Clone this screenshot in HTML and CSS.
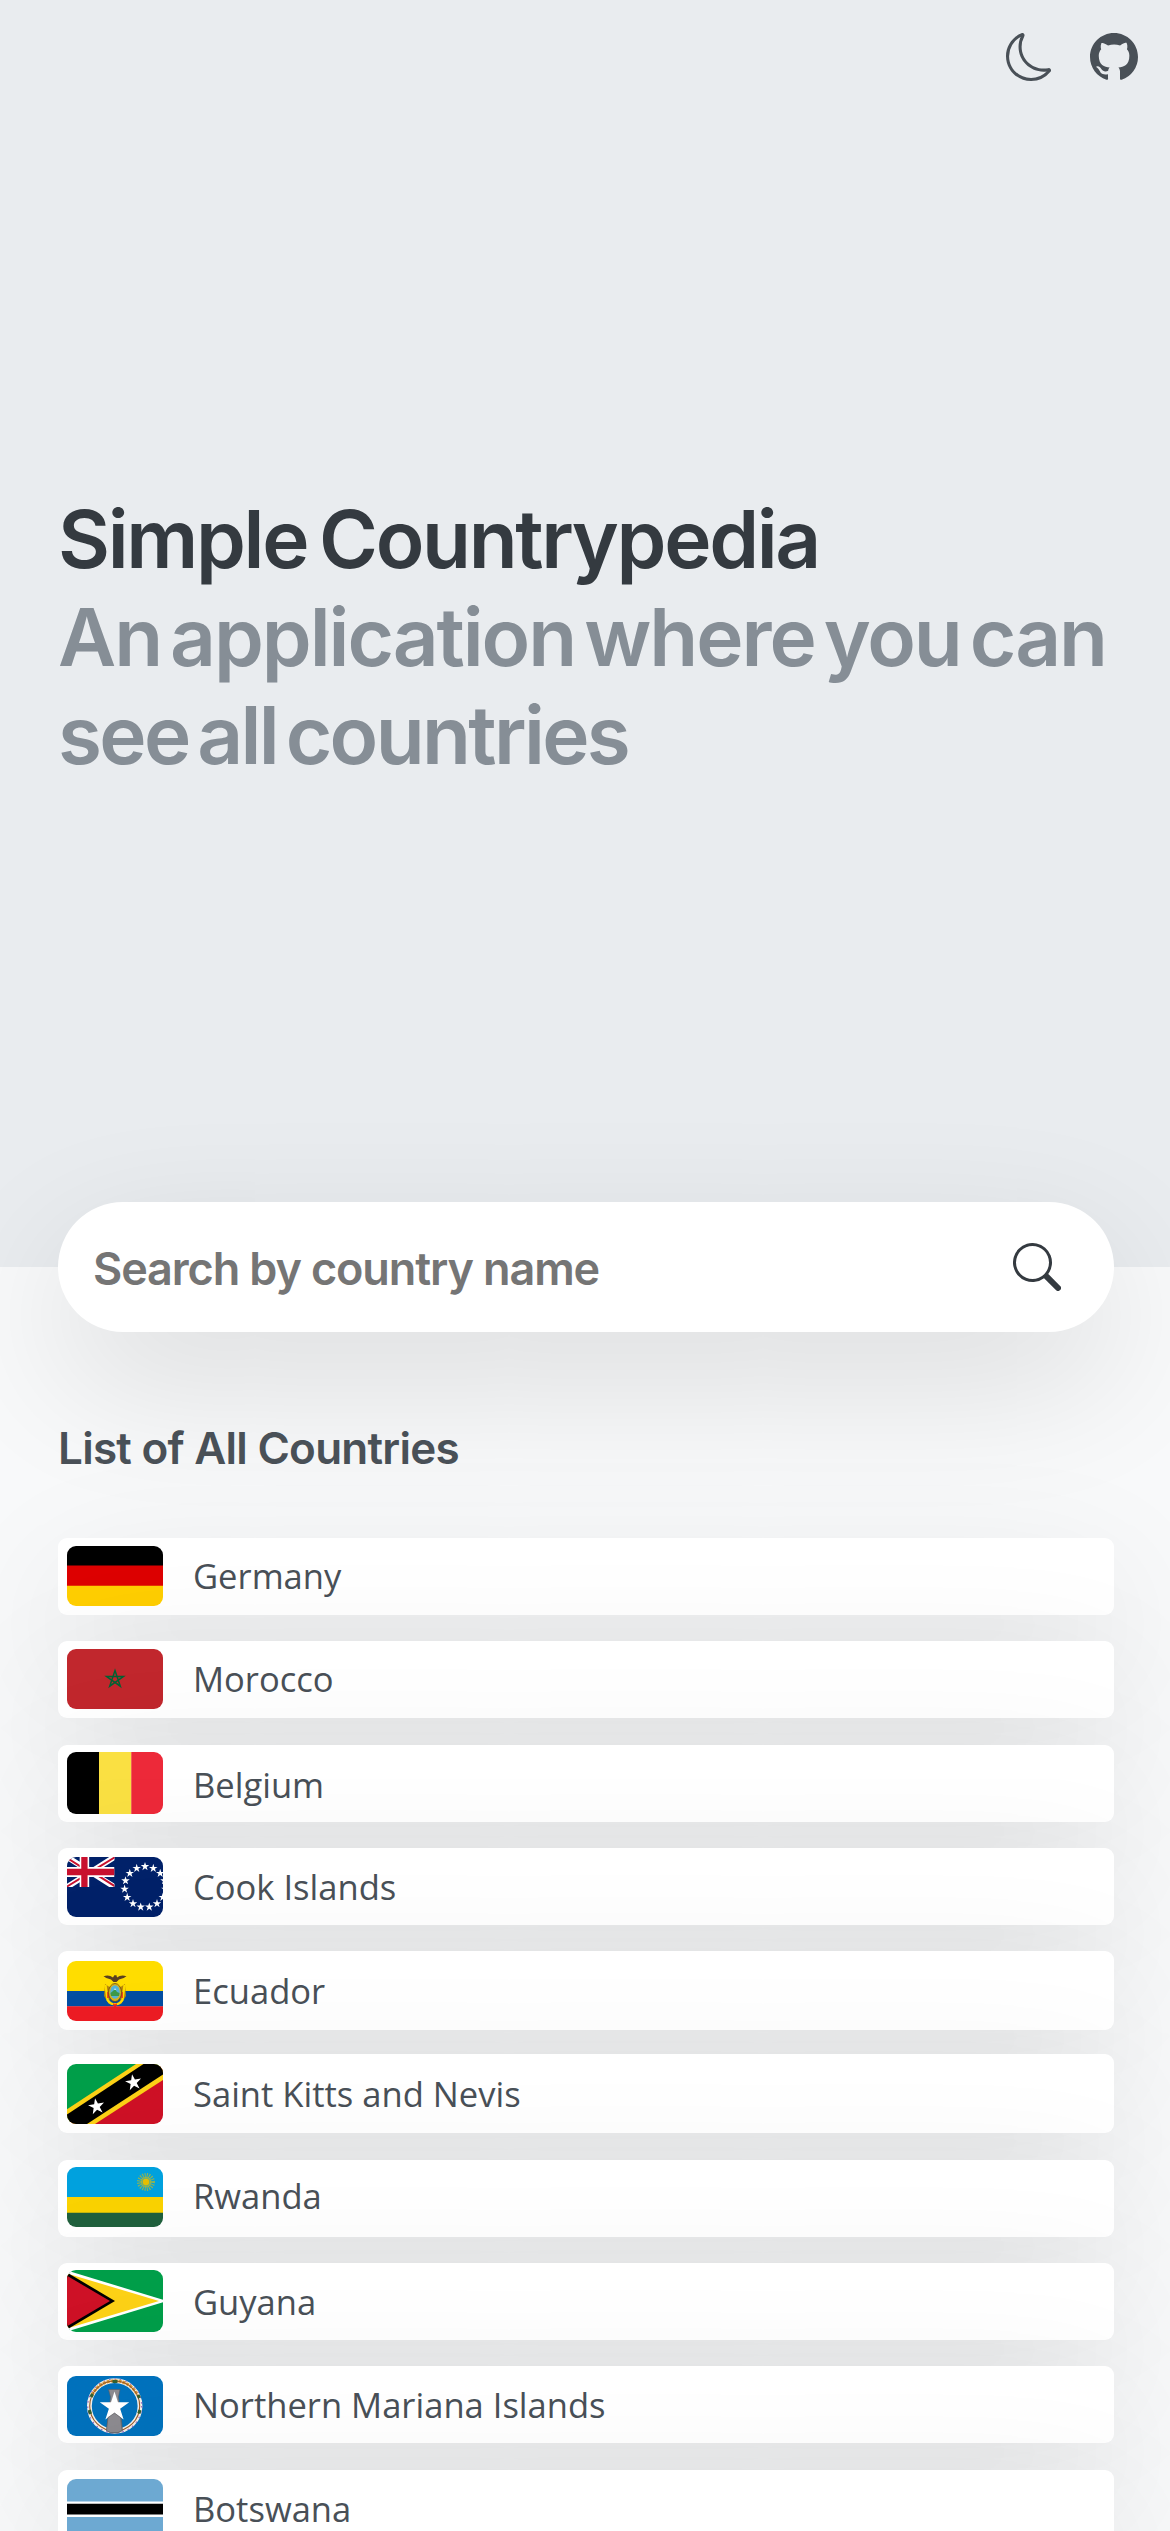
FILE: index.html
```
<!DOCTYPE html>
<html lang="en">
<head>
<meta charset="utf-8">
<meta name="viewport" content="width=device-width, initial-scale=1">
<title>Simple Countrypedia</title>
<link rel="stylesheet" href="styles.css">
</head>
<body>
<svg class="defs" width="0" height="0" aria-hidden="true">
  <defs>
    <path id="star" d="M0-1 .225-.309 .951-.309 .363.118 .588.809 0 .382-.588.809-.363.118-.951-.309-.225-.309z"/>
  </defs>
</svg>

<header class="hero">
  <nav class="nav">
    <button class="icon-button" aria-label="Toggle theme">
      <svg class="icon" viewBox="0 0 16 16"><path d="M6 .278a.768.768 0 0 1 .08.858 7.208 7.208 0 0 0-.878 3.46c0 4.021 3.278 7.277 7.318 7.277.527 0 1.04-.055 1.533-.16a.787.787 0 0 1 .81.316.733.733 0 0 1-.031.893A8.349 8.349 0 0 1 8.344 16C3.734 16 0 12.286 0 7.71 0 4.266 2.114 1.312 5.124.06A.752.752 0 0 1 6 .278zM4.858 1.311A7.269 7.269 0 0 0 1.025 7.71c0 4.02 3.279 7.276 7.319 7.276a7.316 7.316 0 0 0 5.205-2.162c-.337.042-.68.063-1.029.063-4.61 0-8.343-3.714-8.343-8.29 0-1.167.242-2.278.681-3.286z"/></svg>
    </button>
    <a class="icon-button" href="#" aria-label="GitHub">
      <svg class="icon" viewBox="0 0 16 16"><path d="M8 0C3.58 0 0 3.58 0 8c0 3.54 2.29 6.53 5.47 7.59.4.07.55-.17.55-.38 0-.19-.01-.82-.01-1.49-2.01.37-2.53-.49-2.69-.94-.09-.23-.48-.94-.82-1.13-.28-.15-.68-.52-.01-.53.63-.01 1.08.58 1.23.82.72 1.21 1.87.87 2.33.66.07-.52.28-.87.51-1.07-1.78-.2-3.64-.89-3.64-3.95 0-.87.31-1.59.82-2.15-.08-.2-.36-1.02.08-2.12 0 0 .67-.21 2.2.82.64-.18 1.32-.27 2-.27.68 0 1.36.09 2 .27 1.53-1.04 2.2-.82 2.2-.82.44 1.1.16 1.92.08 2.12.51.56.82 1.27.82 2.15 0 3.07-1.87 3.75-3.65 3.95.29.25.54.73.54 1.48 0 1.07-.01 1.93-.01 2.2 0 .21.15.46.55.38A8.012 8.012 0 0 0 16 8c0-4.42-3.58-8-8-8z"/></svg>
    </a>
  </nav>
  <h1 class="title">
    <span class="title-name">Simple Countrypedia</span>
    <span class="title-lead">An application where you can</span>
    <span class="title-tail">see all countries</span>
  </h1>
</header>

<main class="content">
  <form class="search">
    <input class="search-input" type="text" placeholder="Search by country name" aria-label="Search by country name">
    <button class="search-button" type="button" aria-label="Search">
      <svg class="icon" viewBox="0 0 16 16"><path d="M11.742 10.344a6.5 6.5 0 1 0-1.397 1.398h-.001c.03.04.062.078.098.115l3.85 3.85a1 1 0 0 0 1.415-1.414l-3.85-3.85a1.007 1.007 0 0 0-.115-.1zM12 6.5a5.5 5.5 0 1 1-11 0 5.5 5.5 0 0 1 11 0z"/></svg>
    </button>
  </form>

  <h2 class="subtitle">List of All Countries</h2>

  <ul class="countries">
    <li class="country">
      <svg class="flag" viewBox="0 0 96 60" preserveAspectRatio="none"><path fill="#000" d="M0 0h96v20H0z"/><path fill="#d00" d="M0 19.5h96V40H0z"/><path fill="#ffce00" d="M0 39.7h96V60H0z"/></svg>
      <span class="name">Germany</span>
    </li>
    <li class="country">
      <svg class="flag" viewBox="0 0 96 60" preserveAspectRatio="none"><path fill="#c1272d" d="M0 0h96v60H0z"/><path fill="none" stroke="#006233" stroke-width="1.5" d="M48 21.5 53.3 37.2 39.6 27.5H56.4L42.7 37.2z"/></svg>
      <span class="name">Morocco</span>
    </li>
    <li class="country">
      <svg class="flag flag-tall" viewBox="0 0 96 60" preserveAspectRatio="none"><path fill="#000" d="M0 0h32v60H0z"/><path fill="#fae042" d="M32 0h32.5v60H32z"/><path fill="#ed2939" d="M64.3 0H96v60H64.300z"/></svg>
      <span class="name">Belgium</span>
    </li>
    <li class="country">
      <svg class="flag" viewBox="0 0 96 60" preserveAspectRatio="none">
        <path fill="#012169" d="M0 0h96v60H0z"/>
        <svg width="47.500" height="30" viewBox="0 0 60 30" preserveAspectRatio="none">
          <path stroke="#fff" stroke-width="6" d="M0 0 60 30M60 0 0 30"/>
          <path stroke="#c8102e" stroke-width="2" d="M0 1 28 15M60 29 32 15M61 0 32 14M-1 30 28 16"/>
          <path stroke="#fff" stroke-width="12" d="M22 0V30"/>
          <path stroke="#fff" stroke-width="10" d="M0 15H60"/>
          <path stroke="#c8102e" stroke-width="8" d="M22 0V30"/>
          <path stroke="#c8102e" stroke-width="6.500" d="M0 15H60"/>
        </svg>
        <g fill="#fff">
          <use href="#star" transform="translate(78 9.500) scale(4.500)"/>
          <use href="#star" transform="translate(86.300 11.300) scale(4.500)"/>
          <use href="#star" transform="translate(93.200 16.300) scale(4.500)"/>
          <use href="#star" transform="translate(97.500 23.700) scale(4.500)"/>
          <use href="#star" transform="translate(98.400 32.100) scale(4.500)"/>
          <use href="#star" transform="translate(95.800 40.300) scale(4.500)"/>
          <use href="#star" transform="translate(90 46.600) scale(4.500)"/>
          <use href="#star" transform="translate(82.300 50) scale(4.500)"/>
          <use href="#star" transform="translate(73.700 50) scale(4.500)"/>
          <use href="#star" transform="translate(66 46.600) scale(4.500)"/>
          <use href="#star" transform="translate(60.200 40.300) scale(4.500)"/>
          <use href="#star" transform="translate(57.600 32.100) scale(4.500)"/>
          <use href="#star" transform="translate(58.500 23.700) scale(4.500)"/>
          <use href="#star" transform="translate(62.800 16.300) scale(4.500)"/>
          <use href="#star" transform="translate(69.700 11.300) scale(4.500)"/>
        </g>
      </svg>
      <span class="name">Cook Islands</span>
    </li>
    <li class="country">
      <svg class="flag" viewBox="0 0 96 60" preserveAspectRatio="none">
        <path fill="#fd0" d="M0 0h96v30H0z"/><path fill="#034ea2" d="M0 30h96v15.500H0z"/><path fill="#ed1c24" d="M0 45.300h96V60H0z"/>
        <path fill="#b8860b" d="M38 23 44 27 42 43 37 35zM58 23 52 27 54 43 59 35z"/>
        <path fill="none" stroke="#fd0" stroke-width="2.200" d="M38.500 24 40.500 39Q44 44 48 43Q52 44 55.500 39L57.500 24"/>
        <path fill="none" stroke="#ed1c24" stroke-width="1.500" d="M41 31v6M55 31v6M46.500 42.500 48 45.500 49.500 42.500"/>
        <ellipse cx="48" cy="31.500" rx="6.500" ry="9" fill="#d9b21c" stroke="#6b4a12" stroke-width=".8"/>
        <ellipse cx="48" cy="31" rx="4.800" ry="6.800" fill="#55b4d9"/>
        <path fill="#3c9a4a" d="M43.500 32 46 30 48 28 50 31 52.500 32 52 35H44z"/><path fill="#c7ecf4" d="m47 29 1-2 1.200 2z"/>
        <path fill="#5a4020" d="M36.500 15.300Q42 13.300 46 16.500L47.300 14.200H49.500L50 16.500Q54 13.300 59.500 15.300 56.500 18 52 18.500L49.500 21H46.500L44 18.500Q39.500 18 36.500 15.300z"/>
      </svg>
      <span class="name">Ecuador</span>
    </li>
    <li class="country">
      <svg class="flag" viewBox="0 0 96 60" preserveAspectRatio="none">
        <path fill="#009e49" d="M0 0h96L0 60z"/><path fill="#ce1126" d="M96 0v60H0z"/>
        <path fill="#fcd116" d="M0 45.300 69 0H96V16L28 60H0z"/><path d="M0 50.500 76.500 0H96V10.500L20 60H0z"/>
        <g fill="#fff"><use href="#star" transform="translate(29.500 42.500) rotate(-10) scale(8.500)"/><use href="#star" transform="translate(66.500 18.500) rotate(-10) scale(8.500)"/></g>
      </svg>
      <span class="name">Saint Kitts and Nevis</span>
    </li>
    <li class="country">
      <svg class="flag" viewBox="0 0 96 60" preserveAspectRatio="none">
        <path fill="#00a1de" d="M0 0h96v30H0z"/><path fill="#fad201" d="M0 30h96v16H0z"/><path fill="#20603d" d="M0 45.800h96V60H0z"/>
        <circle cx="79" cy="15" r="5.500" fill="#e5be01" opacity=".45"/>
        <circle cx="79" cy="15" r="6.500" fill="none" stroke="#e5be01" stroke-width="5" stroke-dasharray="1 1.042" opacity=".6"/>
        <circle cx="79" cy="15" r="3.200" fill="#e5be01"/>
      </svg>
      <span class="name">Rwanda</span>
    </li>
    <li class="country">
      <svg class="flag flag-tall" viewBox="0 0 96 62" preserveAspectRatio="none">
        <path fill="#009e49" d="M0 0h96v62H0z"/><path fill="#fff" d="M0 .5 100 31 0 61.500z"/><path fill="#fcd116" d="M0 3.500 92 31 0 58.500z"/><path d="M0 2.500 48 31 0 59.500z"/><path fill="#ce1126" d="M0 5.800 43 31 0 56.200z"/>
      </svg>
      <span class="name">Guyana</span>
    </li>
    <li class="country">
      <svg class="flag" viewBox="0 0 96 60" preserveAspectRatio="none">
        <path fill="#0071bc" d="M0 0h96v60H0z"/>
        <g fill="none">
          <circle cx="47.700" cy="30" r="25.300" stroke="#f2efe9" stroke-width="4.800"/>
          <circle cx="47.700" cy="30" r="27" stroke="#9a6cc4" stroke-width="1.300" stroke-dasharray="1.500 4"/>
          <path stroke="#d89b36" stroke-width="3" stroke-dasharray="3 1" d="M25 19A25.300 25.300 0 0 1 70.500 19"/>
          <circle cx="47.700" cy="30" r="25" stroke="#9c5a24" stroke-width="1.100"/>
          <path stroke="#35602f" stroke-width="3.200" d="M45.500 5.500h5M22.300 34 23.500 38M71.800 37.500 73 34M24 21l1.500-3M71 19l1.500 3"/>
        </g>
        <path fill="#8c8a8f" stroke="#5c5c60" stroke-width=".6" d="M41.500 13.500H53L51.500 21 54 40 55.500 54.500 51 57H43.500L39.500 54.500 41.500 40 43.500 21z"/>
        <use href="#star" fill="#fff" transform="translate(47.500 31) scale(15.500)"/>
        <path fill="#8c8a8f" stroke="#5c5c60" stroke-width=".6" d="m47.500 37 6 4.500 1.500 13-4 2H43.500L39.500 54.500 41 41.500z"/>
      </svg>
      <span class="name">Northern Mariana Islands</span>
    </li>
    <li class="country">
      <svg class="flag" viewBox="0 0 96 60" preserveAspectRatio="none"><path fill="#6da9d2" d="M0 0h96v60H0z"/><path fill="#fff" d="M0 22.500h96V38H0z"/><path d="M0 24.700h96v10.800H0z"/></svg>
      <span class="name">Botswana</span>
    </li>
  </ul>
</main>
</body>
</html>
```
FILE: styles.css
```
* {
  box-sizing: border-box;
}

html {
  overflow: hidden;
}

body {
  margin: 0;
  height: 2531px;
  overflow: hidden;
  background: #f8f9fa;
  color: #495057;
  font-family: "Open Sans", "Liberation Sans", sans-serif;
}

.defs {
  position: absolute;
}

.hero {
  height: 1267px;
  background: #e9ecef;
}

.nav {
  display: flex;
  justify-content: flex-end;
  gap: 36px;
  height: 114px;
  padding: 33px 32px 0 0;
}

.icon-button,
.search-button {
  display: block;
  width: 48px;
  height: 48px;
  padding: 0;
  border: 0;
  background: none;
  color: #495057;
}

.icon {
  display: block;
  width: 48px;
  height: 48px;
  fill: currentColor;
}

.title {
  display: flex;
  flex-direction: column;
  margin: 376px 0 0 58px;
  font: 600 80px/98px Inter, "Liberation Sans", sans-serif;
  white-space: nowrap;
  word-spacing: -9px;
  color: #868e96;
}

.title-name {
  color: #343a40;
  letter-spacing: -2.33px;
  word-spacing: -6px;
}

.title-lead {
  letter-spacing: -2.07px;
}

.title-tail {
  letter-spacing: -2.63px;
}

.content {
  padding: 0 56px 0 58px;
}

.search {
  position: relative;
  display: flex;
  align-items: center;
  height: 130px;
  margin-top: -65px;
  padding: 0 53px 0 35px;
  border-radius: 65px;
  background: #fff;
  box-shadow: 0 48px 144px rgba(0, 0, 0, 0.12);
}

.search-input {
  flex: 1;
  min-width: 0;
  height: 72px;
  padding: 2px 0 0;
  border: 0;
  outline: 0;
  background: none;
  font: 600 45px/70px Inter, "Liberation Sans", sans-serif;
  letter-spacing: -1.12px;
}

.search-input::placeholder {
  color: #757575;
}

.search-button {
  color: #343a40;
}

.subtitle {
  position: relative;
  margin: 89px 0 63px;
  font: 600 44px/54px Inter, "Liberation Sans", sans-serif;
  letter-spacing: -0.74px;
}

.countries {
  display: flex;
  flex-direction: column;
  margin: 0;
  padding: 0;
  list-style: none;
}

/* --flag and --name set the top inset of the row's two items */
.country {
  --flag: 8px;
  --name: 14px;
  position: relative;
  flex: none;
  display: flex;
  align-items: flex-start;
  gap: 30px;
  height: 77px;
  margin-bottom: 26.3px;
  padding-left: 9px;
  border-radius: 9px;
  background: #fff;
  box-shadow: 0 48px 144px rgba(0, 0, 0, 0.11);
}

.country:nth-child(3) {
  --flag: 7px;
  --name: 16.5px;
}

.country:nth-child(4),
.country:nth-child(5),
.country:nth-child(6) {
  --flag: 9.5px;
  --name: 15.5px;
}

.country:nth-child(5),
.country:nth-child(6) {
  height: 79px;
  margin-bottom: 24px;
}

.country:nth-child(6) {
  margin-bottom: 26.5px;
}

.country:nth-child(7) {
  --flag: 7px;
  --name: 12.5px;
}

.country:nth-child(8) {
  --flag: 7.5px;
  --name: 15.5px;
}

.country:nth-child(9),
.country:nth-child(10) {
  --flag: 9.5px;
  --name: 15px;
}

.flag {
  flex: none;
  width: 96px;
  height: 60px;
  margin-top: var(--flag);
  border-radius: 9px;
}

.flag-tall {
  height: 62px;
}

.name {
  margin-top: var(--name);
  font-size: 34.56px;
  line-height: 48px;
  white-space: nowrap;
}
```
